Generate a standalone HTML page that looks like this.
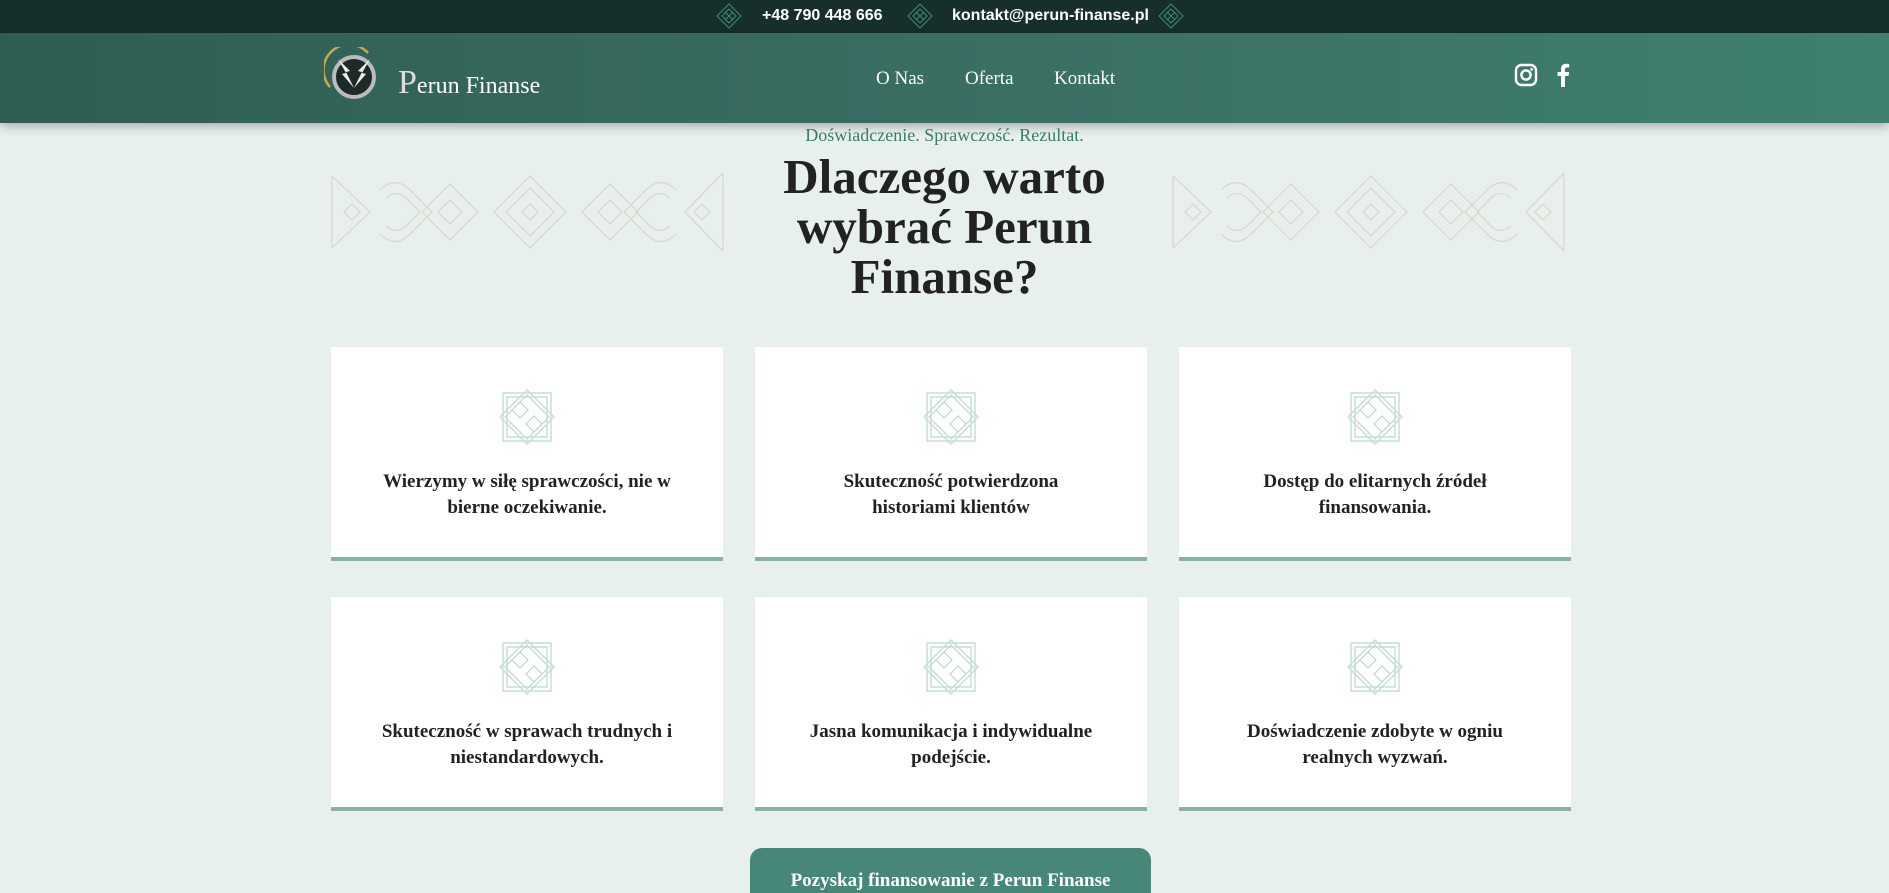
<!DOCTYPE html>
<html lang="pl"><head><meta charset="utf-8">
<style>
*{margin:0;padding:0;box-sizing:border-box}
html,body{width:1889px;height:893px;overflow:hidden}
body{background:#e8f0ed;font-family:"Liberation Serif",serif;color:#1f1f1f;position:relative}
.top{position:absolute;left:0;top:0;width:1889px;height:33px;background:#172f2a;color:#fff;font-family:"Liberation Sans",sans-serif;font-size:16px;font-weight:bold}
.top span{position:absolute;top:7px}
.dia{position:absolute;top:3px;width:26px;height:26px}
.nav{position:absolute;left:0;top:33px;width:1889px;height:90px;background:linear-gradient(90deg,#2e5d53,#3a6e63 50%,#3f8070);box-shadow:0 3px 10px rgba(0,0,0,.3);z-index:2}
.brand{position:absolute;left:398px;top:40px;color:#fff;font-size:24px}
.brand b{font-weight:normal;font-size:34px;color:#ddd;line-height:0}
.links a{position:absolute;top:35px;color:#fff;font-size:19px;text-decoration:none}
.sub{position:absolute;left:0;width:1889px;top:125px;text-align:center;color:#3a7d6e;font-size:18px}
h1{position:absolute;left:0;width:1889px;top:152px;text-align:center;font-size:49px;line-height:50px;font-weight:bold;color:#222}
.orn{position:absolute;top:168px;width:396px;height:88px}
.card{position:absolute;width:392px;height:214px;background:#fff;border-bottom:4px solid #86b3a6;text-align:center}
.card svg{position:absolute;left:167px;top:41px}
.card p{position:absolute;left:40px;right:40px;top:122px;font-size:19px;font-weight:bold;line-height:26px;color:#222}
.btn{position:absolute;left:750px;top:848px;width:401px;height:70px;background:#46877a;border-radius:12px;color:#fff;font-size:19px;font-weight:bold;text-align:center;padding-top:22px}
</style></head><body>
<div class="top">
<svg class="dia" style="left:716px" viewBox="0 0 26 26"><g fill="none" stroke="#3f8a78" stroke-width="1"><path d="M13 1 25 13 13 25 1 13Z"/><path d="M13 6 20 13 13 20 6 13Z"/><path d="M9 9l8 8M17 9l-8 8"/></g></svg>
<span style="left:762px">+48 790 448 666</span>
<svg class="dia" style="left:907px" viewBox="0 0 26 26"><g fill="none" stroke="#3f8a78" stroke-width="1"><path d="M13 1 25 13 13 25 1 13Z"/><path d="M13 6 20 13 13 20 6 13Z"/><path d="M9 9l8 8M17 9l-8 8"/></g></svg>
<span style="left:952px">kontakt@perun-finanse.pl</span>
<svg class="dia" style="left:1158px" viewBox="0 0 26 26"><g fill="none" stroke="#3f8a78" stroke-width="1"><path d="M13 1 25 13 13 25 1 13Z"/><path d="M13 6 20 13 13 20 6 13Z"/><path d="M9 9l8 8M17 9l-8 8"/></g></svg>
</div>
<div class="nav">
<svg style="position:absolute;left:324px;top:14px" width="56" height="56" viewBox="0 0 56 56">
<path d="M6 40A24 24 0 0 1 44 6" fill="none" stroke="#c8a84a" stroke-width="2.5"/>
<circle cx="30" cy="30" r="20" fill="#1e2a28" stroke="#bbb" stroke-width="4"/>
<path d="M14 12l12 12-4 1 8 16-12-14 4-1z" fill="#eee"/>
<path d="M46 12l-12 12 4 1-8 16 12-14-4-1z" fill="#eee"/>
</svg>
<div class="brand"><b>P</b>erun Finanse</div>
<div class="links"><a style="left:876px">O Nas</a><a style="left:965px">Oferta</a><a style="left:1054px">Kontakt</a></div>
<svg style="position:absolute;left:1514px;top:30px" width="24" height="24" viewBox="0 0 24 24"><rect x="2" y="2" width="20" height="20" rx="5.5" fill="none" stroke="#fff" stroke-width="2.4"/><circle cx="12" cy="12" r="4.6" fill="none" stroke="#fff" stroke-width="2.4"/><circle cx="17.6" cy="6.4" r="1.4" fill="#fff"/></svg>
<svg style="position:absolute;left:1556px;top:29px" width="14" height="25" viewBox="0 0 14 25"><path d="M9 25V14h3.5l.6-4H9V7.5c0-1.2.4-2 2-2h2.2V2c-.5-.1-1.700-.2-3.100-.2C7.1 1.8 5 3.6 5 7v3H1.5v4H5v11z" fill="#fff"/></svg>
</div>
<div class="sub">Doświadczenie. Sprawczość. Rezultat.</div>
<h1>Dlaczego warto<br>wybrać Perun<br>Finanse?</h1>
<svg class="orn" style="left:330px" viewBox="0 0 396 88"><g fill="none" stroke="#ddd6cc" stroke-width="1.3">
<path d="M2 8V80M393 5V83"/>
<path d="M2 8 40 44 2 80M14 44l8-8 8 8-8 8z"/>
<path d="M50 22c10-10 20-10 30 0l22 22-22 22c-10 10-20 10-30 0M56 30c6-6 14-6 20 0l14 14-14 14c-6 6-14 6-20 0"/>
<path d="M120 16 148 44 120 72 92 44ZM120 32l12 12-12 12-12-12Z"/>
<path d="M200 8 236 44 200 80 164 44ZM200 20 224 44 200 68 176 44ZM200 36l8 8-8 8-8-8Z"/>
<path d="M280 16 308 44 280 72 252 44ZM280 32l12 12-12 12-12-12Z"/>
<path d="M346 22c-10-10-20-10-30 0l-22 22 22 22c10 10 20 10 30 0M340 30c-6-6-14-6-20 0l-14 14 14 14c6 6 14 6 20 0"/>
<path d="M393 5 355 44 393 83M380 44l-8-8-8 8 8 8z"/>
</g></svg>
<svg class="orn" style="left:1171px" viewBox="0 0 396 88"><g fill="none" stroke="#ddd6cc" stroke-width="1.3">
<path d="M2 8V80M393 5V83"/>
<path d="M2 8 40 44 2 80M14 44l8-8 8 8-8 8z"/>
<path d="M50 22c10-10 20-10 30 0l22 22-22 22c-10 10-20 10-30 0M56 30c6-6 14-6 20 0l14 14-14 14c-6 6-14 6-20 0"/>
<path d="M120 16 148 44 120 72 92 44ZM120 32l12 12-12 12-12-12Z"/>
<path d="M200 8 236 44 200 80 164 44ZM200 20 224 44 200 68 176 44ZM200 36l8 8-8 8-8-8Z"/>
<path d="M280 16 308 44 280 72 252 44ZM280 32l12 12-12 12-12-12Z"/>
<path d="M346 22c-10-10-20-10-30 0l-22 22 22 22c10 10 20 10 30 0M340 30c-6-6-14-6-20 0l-14 14 14 14c6 6 14 6 20 0"/>
<path d="M393 5 355 44 393 83M380 44l-8-8-8 8 8 8z"/>
</g></svg>

<div class="card" style="left:331px;top:347px"><svg width="58" height="58" viewBox="0 0 58 58"><g fill="none" stroke="#c5ddd5" stroke-width="1.4"><path d="M5 5H53V53H5ZM9 9H49V49H9Z"/><path d="M29 2 56 29 29 56 2 29ZM29 7 51 29 29 51 7 29Z"/><path d="M22 14l8 8-8 8-8-8zM36 28l8 8-8 8-8-8z"/></g></svg><p>Wierzymy w siłę sprawczości, nie w<br>bierne oczekiwanie.</p></div>
<div class="card" style="left:755px;top:347px"><svg width="58" height="58" viewBox="0 0 58 58"><g fill="none" stroke="#c5ddd5" stroke-width="1.4"><path d="M5 5H53V53H5ZM9 9H49V49H9Z"/><path d="M29 2 56 29 29 56 2 29ZM29 7 51 29 29 51 7 29Z"/><path d="M22 14l8 8-8 8-8-8zM36 28l8 8-8 8-8-8z"/></g></svg><p>Skuteczność potwierdzona<br>historiami klientów</p></div>
<div class="card" style="left:1179px;top:347px"><svg width="58" height="58" viewBox="0 0 58 58"><g fill="none" stroke="#c5ddd5" stroke-width="1.4"><path d="M5 5H53V53H5ZM9 9H49V49H9Z"/><path d="M29 2 56 29 29 56 2 29ZM29 7 51 29 29 51 7 29Z"/><path d="M22 14l8 8-8 8-8-8zM36 28l8 8-8 8-8-8z"/></g></svg><p>Dostęp do elitarnych źródeł<br>finansowania.</p></div>
<div class="card" style="left:331px;top:597px"><svg width="58" height="58" viewBox="0 0 58 58"><g fill="none" stroke="#c5ddd5" stroke-width="1.4"><path d="M5 5H53V53H5ZM9 9H49V49H9Z"/><path d="M29 2 56 29 29 56 2 29ZM29 7 51 29 29 51 7 29Z"/><path d="M22 14l8 8-8 8-8-8zM36 28l8 8-8 8-8-8z"/></g></svg><p>Skuteczność w sprawach trudnych i<br>niestandardowych.</p></div>
<div class="card" style="left:755px;top:597px"><svg width="58" height="58" viewBox="0 0 58 58"><g fill="none" stroke="#c5ddd5" stroke-width="1.4"><path d="M5 5H53V53H5ZM9 9H49V49H9Z"/><path d="M29 2 56 29 29 56 2 29ZM29 7 51 29 29 51 7 29Z"/><path d="M22 14l8 8-8 8-8-8zM36 28l8 8-8 8-8-8z"/></g></svg><p>Jasna komunikacja i indywidualne<br>podejście.</p></div>
<div class="card" style="left:1179px;top:597px"><svg width="58" height="58" viewBox="0 0 58 58"><g fill="none" stroke="#c5ddd5" stroke-width="1.4"><path d="M5 5H53V53H5ZM9 9H49V49H9Z"/><path d="M29 2 56 29 29 56 2 29ZM29 7 51 29 29 51 7 29Z"/><path d="M22 14l8 8-8 8-8-8zM36 28l8 8-8 8-8-8z"/></g></svg><p>Doświadczenie zdobyte w ogniu<br>realnych wyzwań.</p></div>

<div class="btn">Pozyskaj finansowanie z Perun Finanse</div>
</body></html>
